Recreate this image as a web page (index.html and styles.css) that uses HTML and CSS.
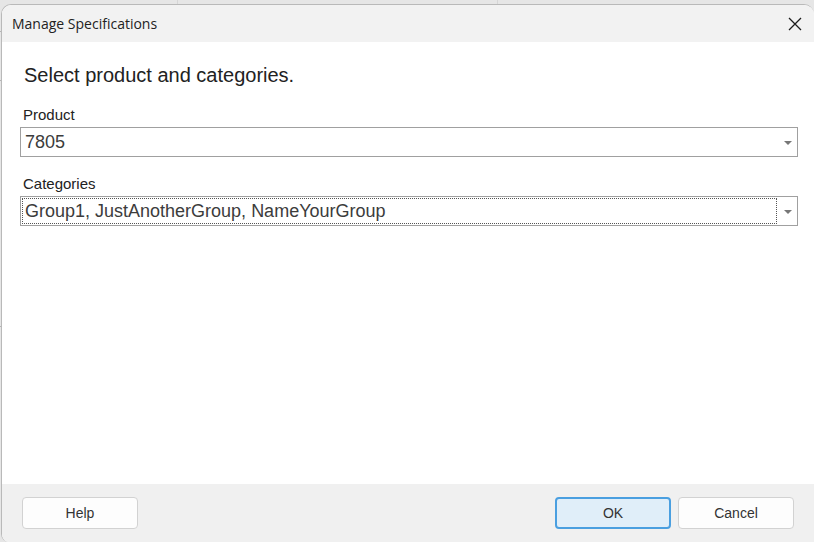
FILE: index.html
```html
<!DOCTYPE html>
<html lang="en">
<head>
<meta charset="utf-8">
<title>Manage Specifications</title>
<link rel="stylesheet" href="styles.css">
</head>
<body>
<main class="dialog">
  <header class="titlebar">
    <h1 class="title">Manage Specifications</h1>
    <button class="close" type="button" aria-label="Close">
      <svg width="14" height="14" viewBox="0 0 14 14" aria-hidden="true"><path d="M1 1L13 13M13 1L1 13" stroke="#1c1c1c" stroke-width="1.3" fill="none"/></svg>
    </button>
  </header>
  <form class="form">
    <div class="content">
      <h2 class="heading">Select product and categories.</h2>
      <div class="field">
        <label class="label" for="product">Product</label>
        <div class="combo">
          <select class="select" id="product"><option>7805</option></select>
          <svg class="arrow" width="8" height="4" viewBox="0 0 8 4" aria-hidden="true"><path d="M0 0H8L4 4Z" fill="#777"/></svg>
        </div>
      </div>
      <div class="field">
        <label class="label" for="categories">Categories</label>
        <div class="combo combo-active">
          <select class="select" id="categories"><option>Group1, JustAnotherGroup, NameYourGroup</option></select>
          <svg class="arrow" width="8" height="4" viewBox="0 0 8 4" aria-hidden="true"><path d="M0 0H8L4 4Z" fill="#777"/></svg>
        </div>
      </div>
    </div>
    <footer class="footer">
      <button class="button" type="button">Help</button>
      <div class="actions">
        <button class="button button-primary" type="button">OK</button>
        <button class="button" type="button">Cancel</button>
      </div>
    </footer>
  </form>
</main>
</body>
</html>
```
FILE: styles.css
```css
* {
  box-sizing: border-box;
}

body {
  margin: 0;
  height: 100vh;
  padding: 4px 0 0 1px;
  background:
    linear-gradient(#d6d6d6, #d6d6d6) 177px 0 / 1px 4px no-repeat,
    linear-gradient(#d6d6d6, #d6d6d6) 497px 0 / 1px 4px no-repeat,
    linear-gradient(#b4b4b4, #b4b4b4) 0 31px / 1px 1px no-repeat,
    linear-gradient(#b4b4b4, #b4b4b4) 0 80px / 1px 1px no-repeat,
    linear-gradient(#b4b4b4, #b4b4b4) 0 326px / 1px 1px no-repeat,
    #e6e6e6;
  font-family: "Liberation Sans", Arial, sans-serif;
  color: #222;
  overflow: hidden;
}

.dialog {
  display: flex;
  flex-direction: column;
  height: 100%;
  border: 1px solid #b9b9b9;
  border-width: 1px 0 0 1px;
  border-radius: 10px 10px 0 8px;
  background: #fff;
  overflow: hidden;
}

.titlebar {
  display: flex;
  align-items: center;
  justify-content: space-between;
  height: 37px;
  flex: none;
  padding: 0 12px 0 10px;
  background: #f2f2f2;
}

.title {
  margin: 0;
  font: 400 14px/20px "Open Sans", "Noto Sans", sans-serif;
}

.close {
  display: flex;
  padding: 0;
  border: 0;
  background: none;
}

.form {
  display: flex;
  flex: 1;
  flex-direction: column;
}

.content {
  flex: 1;
  padding: 20px 16px 0 18px;
}

.heading {
  margin: 0 0 16px;
  padding-left: 4px;
  font-size: 20px;
  font-weight: 400;
  line-height: 26px;
}

.field {
  margin-bottom: 16px;
}

.label {
  display: block;
  padding-left: 3px;
  font-size: 15px;
  line-height: 22px;
  margin-bottom: 1px;
}

.combo {
  position: relative;
  height: 30px;
  border: 1px solid #a0a0a0;
}

.combo-active::after {
  content: "";
  position: absolute;
  inset: 1px 20px 1px 1px;
  border: 1px dotted #555;
  pointer-events: none;
}

.select {
  display: block;
  width: 100%;
  height: 100%;
  padding: 0 24px 0 4px;
  border: 0;
  outline: 0;
  appearance: none;
  background: #fff;
  color: #3c3c3c;
  font: 18px/24px "Liberation Sans", Arial, sans-serif;
}

.arrow {
  position: absolute;
  top: 13px;
  right: 5px;
  pointer-events: none;
}

.footer {
  display: flex;
  align-items: center;
  justify-content: space-between;
  height: 58px;
  padding: 0 20px;
  background: #f0f0f0;
}

.actions {
  display: flex;
  gap: 7px;
}

.button {
  width: 116px;
  height: 32px;
  padding: 0;
  border: 1px solid #d2d2d2;
  border-radius: 4px;
  background: #fdfdfd;
  color: #333;
  font: 14px/20px "Liberation Sans", Arial, sans-serif;
}

.button-primary {
  border: 2px solid #4a9fe0;
  background: #e0eef9;
}
```
